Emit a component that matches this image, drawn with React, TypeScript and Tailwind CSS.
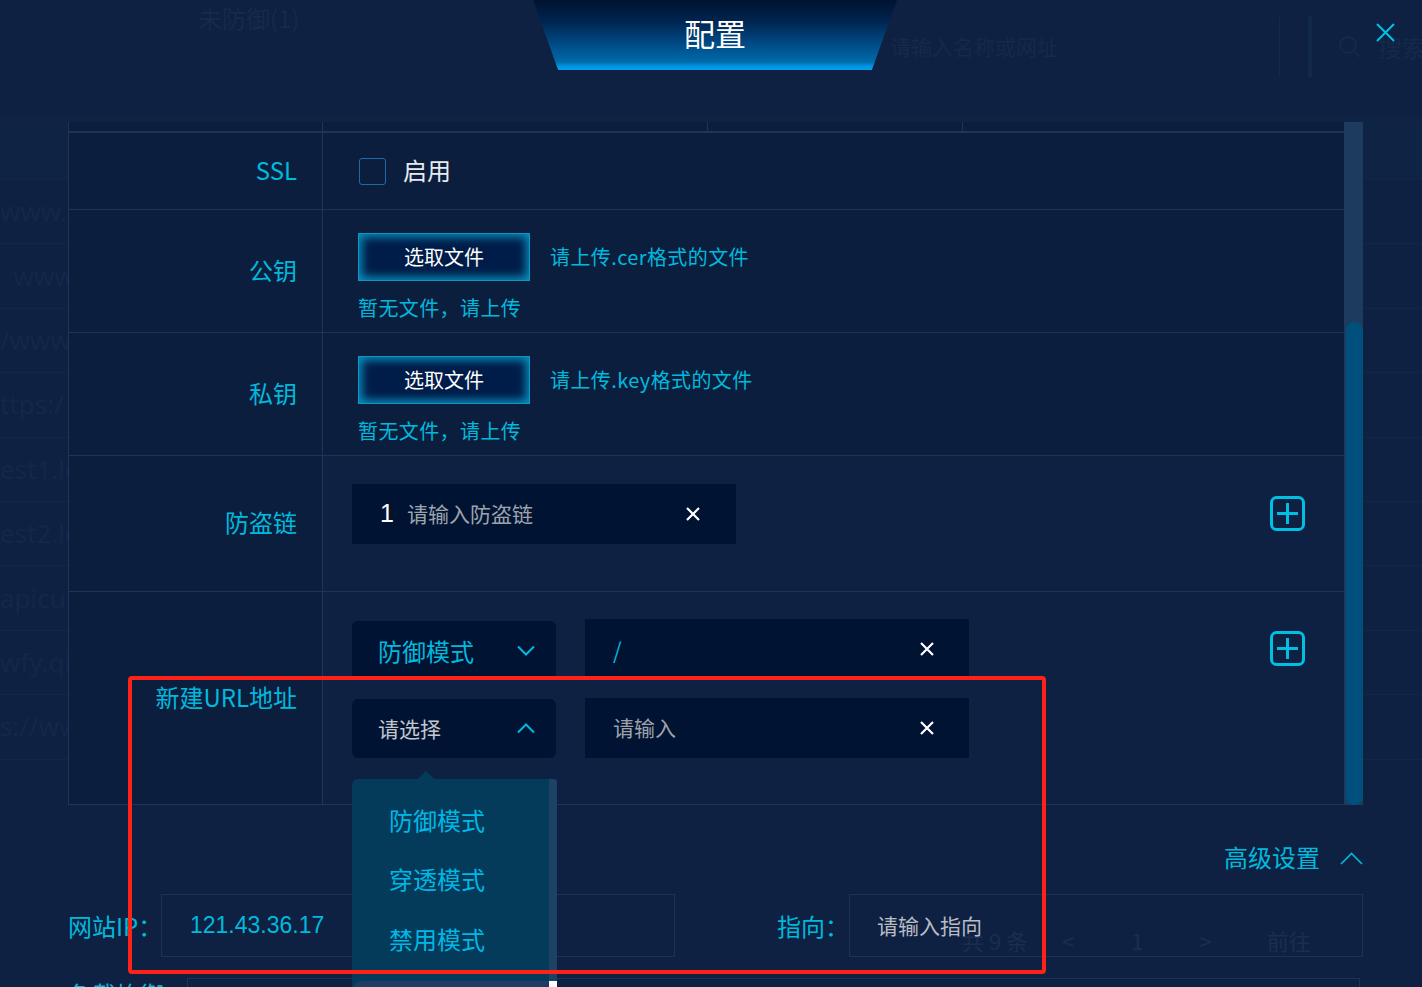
import React from "react"

const CloseIcon = () => (
  <svg width="19" height="19" viewBox="0 0 19 19">
    <path d="M1 1L18 18M18 1L1 18" stroke="#00c2e2" strokeWidth="2" fill="none" />
  </svg>
)

const ClearIcon = () => (
  <svg width="14" height="14" viewBox="0 0 14 14">
    <path d="M1 1L13 13M13 1L1 13" stroke="#ffffff" strokeWidth="2.2" fill="none" />
  </svg>
)

const ChevronDown = () => (
  <svg width="18" height="11" viewBox="0 0 18 11">
    <polyline points="1,1.5 9,9.5 17,1.5" stroke="#00b9dc" strokeWidth="2" fill="none" />
  </svg>
)

const ChevronUp = () => (
  <svg width="18" height="11" viewBox="0 0 18 11">
    <polyline points="1,9.5 9,1.5 17,9.5" stroke="#00b9dc" strokeWidth="2" fill="none" />
  </svg>
)

const PlusBox = () => (
  <svg width="36" height="36" viewBox="0 0 36 36">
    <rect x="1.5" y="1.5" width="32" height="32" rx="5" fill="none" stroke="#00bfe0" strokeWidth="3" />
    <path d="M17.5 7v21M7 17.5h21" stroke="#00bfe0" strokeWidth="3" fill="none" />
  </svg>
)

const BackgroundPage = () => {
  const urls = ["www.l", "  www.", "/www", "ttps:/", "est1.lc", "est2.lc", "apicul", "wfy.qi", "s://ww"]

  return (
    <div className="flex h-full flex-col">
      <div className="flex h-[116px] shrink-0 items-start">
        <div className="ml-[198px] mt-[2px] text-[24px] leading-[32px] text-[#152a4c]">未防御(1)</div>
        <div className="ml-auto mt-[17px] flex h-[60px] w-[395px] shrink-0 items-center border-r border-[#13284a] pl-[5px] text-[21px] text-[#15294b]">
          请输入名称或网址
        </div>
        <div className="-mr-[16px] ml-[28px] mt-[16px] flex h-[61px] w-[130px] shrink-0 items-center gap-[16px] border-l-[4px] border-[#13294b] pl-[26px] text-[24px] text-[#15294b]">
          <svg width="24" height="24" viewBox="0 0 24 24">
            <circle cx="10" cy="10" r="8" stroke="#15294b" strokeWidth="2" fill="none" />
            <path d="M16 16l6 6" stroke="#15294b" strokeWidth="2" />
          </svg>
          搜索
        </div>
      </div>
      <div className="h-[64px] shrink-0 border-b border-[#12264a] bg-[#0f2345]" />
      {urls.map((u, i) => (
        <div
          key={i}
          className="flex h-[64.4px] shrink-0 items-center border-b border-[#12264a] whitespace-pre font-['Noto_Sans',sans-serif] text-[26px] text-[#13274a]"
        >
          {u}
        </div>
      ))}
      <div className="ml-[962px] mt-[165px] flex h-[32px] shrink-0 items-center whitespace-nowrap text-[22px] text-[#1a2e50]">
        <span>共 9 条</span>
        <span className="ml-[34px]">&lt;</span>
        <span className="ml-[57px]">1</span>
        <span className="ml-[56px]">&gt;</span>
        <span className="ml-[55px]">前往</span>
      </div>
    </div>
  )
}

const Row = ({
  rowClass,
  label,
  contentClass,
  children,
}: {
  rowClass: string
  label: string
  contentClass: string
  children: React.ReactNode
}) => (
  <div className={rowClass}>
    <div className="flex w-[254px] shrink-0 items-center justify-end border-r border-[#1f3457] pb-[3px] pr-[25px] text-[24px] leading-[32px] text-[#00b9dc]">
      {label}
    </div>
    <div className={contentClass}>{children}</div>
  </div>
)

const FileRow = ({ label, ext }: { label: string; ext: string }) => (
  <Row
    rowClass="flex h-[123px] shrink-0 border-b border-[#1f3457]"
    label={label}
    contentClass="flex flex-1 flex-col pl-[35px] pt-[23px]"
  >
    <div className="flex items-center">
      <button className="flex h-[48px] w-[172px] items-center justify-center border border-[#0b97c4] bg-[#001c48] text-[20px] text-white shadow-[inset_0_0_10px_3px_#0a8fbd]">
        选取文件
      </button>
      <span className="ml-[20px] text-[20px] leading-[28px] tracking-[0.4px] text-[#00b9dc]">请上传.{ext}格式的文件</span>
    </div>
    <div className="mt-[13px] text-[20px] leading-[28px] tracking-[0.4px] text-[#00b9dc]">暂无文件，请上传</div>
  </Row>
)

const ConfigTable = () => (
  <div className="ml-[68px] flex h-[683px] w-[1295px] shrink-0">
    <div className="flex w-[1276px] flex-col border-l border-[#1f3558] bg-[#0c1e3e]">
      <div className="flex h-[11px] shrink-0 border-b-2 border-[#1f3457]">
        <div className="w-[254px] border-r border-[#1f3457]" />
        <div className="w-[385px] border-r border-[#1f3457]" />
        <div className="w-[255px] border-r border-[#1f3457]" />
        <div className="flex-1" />
      </div>

      <Row
        rowClass="flex h-[77px] shrink-0 border-b border-[#1f3457]"
        label="SSL"
        contentClass="flex flex-1 items-center gap-[17px] pl-[36px]"
      >
        <div className="h-[27px] w-[27px] rounded-[3px] border border-[#1e6aa6]" />
        <span className="pb-[2px] text-[24px] leading-[32px] text-[#e8eaee]">启用</span>
      </Row>

      <FileRow label="公钥" ext="cer" />
      <FileRow label="私钥" ext="key" />

      <Row
        rowClass="flex h-[136px] shrink-0 border-b border-[#1f3457]"
        label="防盗链"
        contentClass="flex flex-1 items-start justify-between bg-[#0f2143] pl-[29px] pr-[38px] pt-[28px]"
      >
        <div className="flex h-[60px] w-[384px] items-center bg-[#001333] pl-[28px] pr-[36px]">
          <span className="font-['Liberation_Sans',sans-serif] text-[25px] text-white">1</span>
          <span className="ml-[13px] flex-1 text-[21px] text-[#9ea3ab]">请输入防盗链</span>
          <ClearIcon />
        </div>
        <div className="flex h-[60px] items-center">
          <PlusBox />
        </div>
      </Row>

      <Row
        rowClass="flex h-[213px] shrink-0 border-b border-[#1f3457]"
        label="新建URL地址"
        contentClass="flex flex-1 items-start justify-between bg-[#0f2143] pl-[29px] pr-[38px] pt-[27px]"
      >
        <div className="flex flex-col gap-[18px]">
          <div className="flex gap-[29px]">
            <div className="mt-[2px] flex h-[59px] w-[204px] items-center justify-between rounded-[6px] bg-[#001333] pl-[26px] pr-[21px]">
              <span className="text-[24px] text-[#00b9dc]">防御模式</span>
              <ChevronDown />
            </div>
            <div className="flex h-[60px] w-[384px] items-center justify-between bg-[#001333] pl-[28px] pr-[35px]">
              <span className="text-[22px] text-[#00b9dc]">/</span>
              <ClearIcon />
            </div>
          </div>
          <div className="flex gap-[29px]">
            <div className="relative mt-[1px] flex h-[59px] w-[204px] items-center justify-between rounded-[6px] bg-[#001333] pl-[26px] pr-[21px]">
              <span className="text-[21px] text-[#c3c6cc]">请选择</span>
              <ChevronUp />
              <div className="absolute left-0 top-[80px] flex h-[230px] w-[205px]">
                <div className="absolute -top-[8px] left-[66px] h-0 w-0 border-x-[8px] border-b-[8px] border-x-transparent border-b-[#043a5a]" />
                <div className="flex w-[197px] flex-col rounded-tl-[6px] bg-[#043a5a] pt-[11px]">
                  {["防御模式", "穿透模式", "禁用模式"].map((m) => (
                    <div key={m} className="flex h-[59.5px] shrink-0 items-center pl-[37px] text-[24px] text-[#00b8e4]">
                      {m}
                    </div>
                  ))}
                  <div className="mt-[12px] h-[40px] shrink-0 rounded-tl-[10px] bg-[#1e3d62]" />
                </div>
                <div className="flex w-[8px] flex-col">
                  <div className="h-[202px] shrink-0 rounded-tr-[3px] bg-[#1c4266]" />
                  <div className="flex-1 bg-white" />
                </div>
              </div>
            </div>
            <div className="flex h-[60px] w-[384px] items-center justify-between bg-[#001333] pl-[28px] pr-[35px]">
              <span className="text-[21px] text-[#9ea2a9]">请输入</span>
              <ClearIcon />
            </div>
          </div>
        </div>
        <div className="flex h-[60px] items-center">
          <PlusBox />
        </div>
      </Row>
    </div>
    <div className="flex w-[19px] flex-col bg-[#1d3b5e] pl-[2px] pt-[200px]">
      <div className="flex-1 rounded-[9px] bg-[#00507e]" />
    </div>
  </div>
)

const Advanced = () => (
  <>
    <div className="mr-[59px] mt-[37px] flex h-[32px] shrink-0 items-center justify-end gap-[20px]">
      <span className="pb-[2px] text-[24px] text-[#00b9dc]">高级设置</span>
      <svg width="23" height="13" viewBox="0 0 23 13">
        <polyline points="1,12 11.5,1.5 22,12" stroke="#00b9dc" strokeWidth="1.6" fill="none" />
      </svg>
    </div>
    <div className="ml-[68px] mr-[59px] mt-[20px] flex h-[63px] shrink-0 items-center">
      <span className="w-[93px] shrink-0 whitespace-nowrap text-[24px] text-[#00b9dc]">网站IP：</span>
      <div className="flex h-full w-[514px] shrink-0 items-center border border-[#1d3254] pl-[28px] font-['Liberation_Sans',sans-serif] text-[23px] text-[#00b9dc]">
        121.43.36.17
      </div>
      <span className="ml-auto whitespace-nowrap text-[24px] text-[#00b9dc]">指向：</span>
      <div className="flex h-full w-[514px] shrink-0 items-center border border-[#1d3254] pl-[27px] text-[21px] text-[#b9bcc2]">
        请输入指向
      </div>
    </div>
    <div className="ml-[68px] mr-[62px] mt-[21px] flex shrink-0 items-start">
      <span className="w-[119px] shrink-0 whitespace-nowrap text-[24px] leading-[32px] text-[#00b9dc]">负载均衡</span>
      <div className="h-[60px] flex-1 border border-[#1d3254]" />
    </div>
  </>
)

export default function App() {
  return (
    <div className="relative h-[987px] w-full overflow-hidden bg-[#0e2142] font-['Noto_Sans_CJK_SC','Noto_Sans',sans-serif]">
      <BackgroundPage />

      <div className="absolute inset-0 flex flex-col">
        <div className="grid h-[122px] shrink-0 grid-cols-[1fr_auto_1fr]">
          <div />
          <div className="ml-2 flex h-[70px] w-[364px] items-center justify-center bg-[linear-gradient(180deg,#001331_0%,#00244f_30%,#004a84_62%,#006aa8_88%,#0090dd_94%,#00a2f0_100%)] pb-[6px] [clip-path:polygon(0_0,100%_0,93.1%_100%,6.9%_100%)]">
            <span className="text-[31px] leading-none text-white">配置</span>
          </div>
          <div className="flex items-start justify-end pr-[27px] pt-[23px]">
            <CloseIcon />
          </div>
        </div>
        <ConfigTable />
        <Advanced />
      </div>

      <div className="pointer-events-none absolute left-[128px] top-[676px] h-[298px] w-[918px] rounded-[4px] border-[4px] border-[#ff2219]" />
    </div>
  )
}
